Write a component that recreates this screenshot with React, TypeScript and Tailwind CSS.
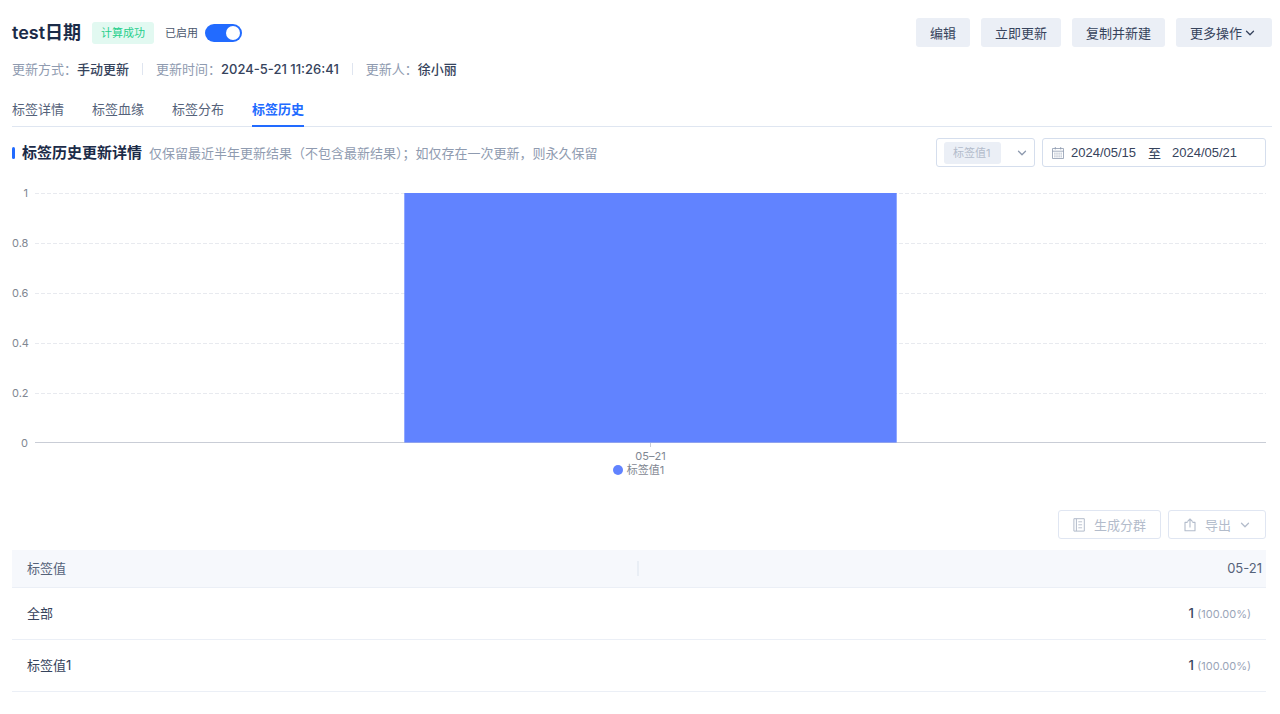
import { useState } from "react";

const actions = ["编辑", "立即更新", "复制并新建"];

const meta = [
  { label: "更新方式：", value: "手动更新" },
  { label: "更新时间：", value: "2024-5-21 11:26:41" },
  { label: "更新人：", value: "徐小丽" },
];

const tabs = ["标签详情", "标签血缘", "标签分布", "标签历史"];

const ticks = ["1", "0.8", "0.6", "0.4", "0.2", "0"];

const rows = [
  { name: "全部", count: 1, percent: "100.00%" },
  { name: "标签值1", count: 1, percent: "100.00%" },
];

function Chevron({ className }: { className?: string }) {
  return (
    <svg viewBox="0 0 10 10" className={className} fill="none" stroke="currentColor" aria-hidden="true">
      <path d="M1.5 3.2 5 6.7l3.5-3.5" strokeWidth="1.3" strokeLinecap="round" strokeLinejoin="round" />
    </svg>
  );
}

function CalendarIcon() {
  return (
    <svg viewBox="0 0 12 12" className="w-3 h-3 shrink-0 text-[#8d99ae]" fill="none" stroke="currentColor" aria-hidden="true">
      <path d="M.5 1.5h11v10H.5zM.5 4.2h11M3.3 0v2.5M8.7 0v2.5" strokeWidth="0.8" />
      <path d="M2.3 6.2h7.6M2.3 8h7.6M2.3 9.8h7.6" strokeWidth="0.8" strokeDasharray="1.2 0.9" />
    </svg>
  );
}

function NotebookIcon() {
  return (
    <svg viewBox="0 0 12 14" className="w-3 h-3.5 shrink-0" fill="none" stroke="currentColor" aria-hidden="true">
      <path d="M.9.7h10.4v12.4H.9zM3.4.7v12.4" strokeWidth="1" />
      <path d="M5.3 3.8h3.8M5.3 6.8h3.8M5.3 9.8h3.8" strokeWidth="0.9" />
    </svg>
  );
}

function ExportIcon() {
  return (
    <svg viewBox="0 0 12 14" className="w-3 h-3.5 shrink-0" fill="none" stroke="currentColor" aria-hidden="true">
      <path d="M3.6 4.4H1v8.4h10V4.4H8.4" strokeWidth="1.1" strokeLinejoin="round" />
      <path d="M6 9.4V1.2M3.4 3.6 6 1l2.6 2.6" strokeWidth="1.1" strokeLinejoin="round" />
    </svg>
  );
}

function HistoryChart() {
  return (
    <div className="pr-[6px]">
      <div className="flex gap-[7px]">
        <div className="w-4 shrink-0 flex flex-col justify-between text-right text-[11px] leading-4 text-[#7f8792]">
          {ticks.map((t) => (
            <span key={t}>{t}</span>
          ))}
        </div>
        <svg className="flex-1 min-w-0 h-[266px]" role="img" aria-label="标签值1">
          {[8, 58, 108, 158, 208].map((y) => (
            <line key={y} x1="0" x2="100%" y1={y + 0.5} y2={y + 0.5} stroke="#e8eaef" strokeDasharray="4 2" />
          ))}
          <rect x="30%" y="8" width="40%" height="250" fill="#6183ff" />
          <line x1="0" x2="100%" y1="257.5" y2="257.5" stroke="#c9cdd6" />
          <rect x="30%" y="257" width="40%" height="1" fill="#8fa2ee" />
          <line x1="50%" x2="50%" y1="258" y2="262" stroke="#c9cdd6" />
        </svg>
      </div>
      <div className="pl-[23px] flex flex-col items-center text-[11px] leading-[14px] text-[#7f8792] -mt-[2px]">
        <span>05–21</span>
        <span className="flex items-center gap-1 pr-6">
          <i className="w-2.5 h-2.5 rounded-full bg-[#6183ff]" />
          标签值1
        </span>
      </div>
    </div>
  );
}

export default function App() {
  const [enabled, setEnabled] = useState(true);
  const [tab, setTab] = useState("标签历史");

  return (
    <main className="pl-3 pr-2 pt-[18px] bg-white text-[13px] leading-5 text-[#36435c] font-['Inter','Noto_Sans_CJK_SC',sans-serif]">
      {/* Title and actions */}
      <header className="flex items-center justify-between h-[29px]">
        <div className="flex items-center">
          <h1 className="text-lg leading-6 font-semibold text-[#1b2b48]">test日期</h1>
          <span className="ml-[11px] h-[22px] px-[9px] flex items-center rounded-[3px] bg-[#e2f9f1] text-[11px] text-[#25cf8b]">计算成功</span>
          <label className="ml-[11px] flex items-center gap-[7px] text-[11px] text-[#4a566c]">
            已启用
            <input
              type="checkbox"
              role="switch"
              checked={enabled}
              onChange={(e) => setEnabled(e.target.checked)}
              className="appearance-none w-[37px] h-[18px] p-[2px] flex rounded-full bg-[#c5cbd8] checked:bg-[#226bff] checked:justify-end before:w-3.5 before:h-3.5 before:rounded-full before:bg-white"
            />
          </label>
        </div>
        <div className="flex gap-[11px]">
          {actions.map((a) => (
            <button key={a} className="h-[29px] px-[14px] rounded-[3px] bg-[#ebeff6]">
              {a}
            </button>
          ))}
          <button className="h-[29px] pl-[14px] pr-[17px] flex items-center gap-[3px] rounded-[3px] bg-[#ebeff6]">
            更多操作
            <Chevron className="w-2.5 h-2.5" />
          </button>
        </div>
      </header>

      {/* Update info */}
      <dl className="mt-4 flex items-center divide-x divide-[#dfe5f0]">
        {meta.map((m) => (
          <div key={m.label} className="flex h-3 items-center px-[13px] first:pl-0">
            <dt className="text-[#8f9bb0]">{m.label}</dt>
            <dd className="font-medium">{m.value}</dd>
          </div>
        ))}
      </dl>

      {/* Tabs */}
      <nav role="tablist" className="mt-6 flex gap-7 border-b border-[#dfe6f1] text-[#55627a]">
        {tabs.map((t) => (
          <button
            key={t}
            role="tab"
            aria-selected={t === tab}
            onClick={() => setTab(t)}
            className="h-7 -mb-px pb-2 border-b-2 border-transparent aria-selected:border-[#226bff] aria-selected:text-[#226bff] aria-selected:font-semibold"
          >
            {t}
          </button>
        ))}
      </nav>

      {/* Section heading and filters */}
      <section className="mt-[11px] pr-[6px] flex items-center justify-between">
        <div className="flex items-center">
          <i className="w-[3px] h-3 rounded-sm bg-[#226bff]" />
          <h2 className="ml-[7px] text-[15px] font-semibold text-[#1b2b48]">标签历史更新详情</h2>
          <p className="ml-[7px] text-[#8f9bb0]">仅保留最近半年更新结果（不包含最新结果）；如仅存在一次更新，则永久保留</p>
        </div>
        <div className="flex gap-[7px]">
          <div className="w-[99px] h-[29px] px-[7px] flex items-center justify-between rounded-[3px] border border-[#d5deed]">
            <select
              disabled
              aria-label="标签值"
              className="appearance-none w-[57px] h-[22px] pl-[9px] rounded-[3px] bg-[#ebeff6] text-[11px] text-[#b3bccb] opacity-100"
            >
              <option>标签值1</option>
            </select>
            <Chevron className="w-2.5 h-2.5 text-[#8d99ae]" />
          </div>
          <div className="w-[224px] h-[29px] px-[9px] flex items-center rounded-[3px] border border-[#d5deed]">
            <CalendarIcon />
            <input
              aria-label="开始日期"
              defaultValue="2024/05/15"
              className="ml-[7px] w-[70px] font-['Liberation_Sans',sans-serif]"
            />
            <span className="mx-[7px]">至</span>
            <input
              aria-label="结束日期"
              defaultValue="2024/05/21"
              className="ml-1 w-[70px] font-['Liberation_Sans',sans-serif]"
            />
          </div>
        </div>
      </section>

      <div className="mt-[18px]">
        <HistoryChart />
      </div>

      <div className="mt-[33px] pr-[6px] flex justify-end gap-[7px] text-[#b3bccb]">
        <button className="h-[29px] px-[14px] flex items-center gap-[9px] rounded-[3px] border border-[#e0e6f2]">
          <NotebookIcon />
          生成分群
        </button>
        <button className="h-[29px] px-[15px] flex items-center gap-[9px] rounded-[3px] border border-[#e0e6f2]">
          <ExportIcon />
          导出
          <Chevron className="w-2.5 h-2.5" />
        </button>
      </div>

      <div className="mt-[11px] pr-[6px]">
        <table className="w-full table-fixed">
          <thead>
            <tr className="h-[37px] bg-[#f6f8fc] border-b border-[#ebeff6] text-[#55627a]">
              <th className="pl-[15px] text-left font-normal">
                <div className="h-[15px] flex items-center border-r-2 border-[#e9eef5]">标签值</div>
              </th>
              <th className="pr-1 text-right font-normal">05-21</th>
            </tr>
          </thead>
          <tbody>
            {rows.map((r) => (
              <tr key={r.name} className="h-[52px] border-b border-[#ebeff6]">
                <td className="pl-[15px]">{r.name}</td>
                <td className="pr-[15px] text-right font-medium">
                  {r.count} <span className="text-[11px] font-normal text-[#9aa5b8]">({r.percent})</span>
                </td>
              </tr>
            ))}
          </tbody>
        </table>
      </div>
    </main>
  );
}
